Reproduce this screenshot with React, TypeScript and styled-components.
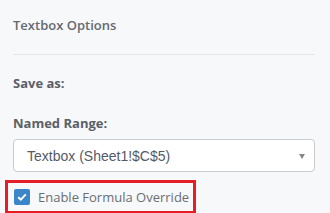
import {createGlobalStyle, styled} from "styled-components";

const GlobalStyle = createGlobalStyle`
  html, body {
    margin: 0;
    padding: 0;
    background: #f7f8fa;
  }
  body {
    font-family: "Open Sans", sans-serif;
  }
`;

const Panel = styled.div`
  width: 330px;
  height: 213px;
  box-sizing: border-box;
  padding: 16px 15px 0 13px;
  background: #f7f8fa;
  overflow: hidden;
`;

const Title = styled.div`
  font-size: 13px;
  font-weight: 600;
  color: #666a70;
  line-height: 18px;
  height: 22px;
`;

const Divider = styled.hr`
  margin: 16px 0 0 0;
  border: none;
  border-top: 1px solid #e5e6e8;
`;

const Label = styled.div<{mt: number}>`
  margin-top: ${(p) => p.mt}px;
  font-size: 13px;
  font-weight: 700;
  color: #5b5f66;
  line-height: 18px;
`;

const Select = styled.div`
  margin-top: 7px;
  height: 33px;
  box-sizing: border-box;
  background: #fff;
  border: 1px solid #ccc;
  border-radius: 4px;
  display: flex;
  align-items: center;
  justify-content: space-between;
  padding: 0 9px 0 13px;
  font-family: "Liberation Sans", Arial, sans-serif;
  font-size: 14px;
  color: #555a66;
`;

const Caret = styled.span`
  width: 0;
  height: 0;
  border-left: 3px solid transparent;
  border-right: 3px solid transparent;
  border-top: 5px solid #888;
  margin-top: 1px;
`;

const Highlight = styled.div`
  margin: 8px 0 0 -8px;
  width: 191px;
  height: 34px;
  box-sizing: border-box;
  border: 3px solid #e41e26;
  display: flex;
  align-items: center;
  gap: 8px;
  padding-left: 6px;
  white-space: nowrap;
`;

const Box = styled.span`
  flex: none;
  width: 16px;
  height: 16px;
  border-radius: 2px;
  background: #3b86c8;
  display: flex;
  align-items: center;
  justify-content: center;
`;

const CheckText = styled.span`
  font-size: 13px;
  color: #6a6e74;
`;

export default function App() {
  return (
    <>
      <GlobalStyle />
      <Panel>
        <Title>Textbox Options</Title>
        <Divider />
        <Label mt={19}>Save as:</Label>
        <Label mt={22}>Named Range:</Label>
        <Select>
          <span>Textbox (Sheet1!$C$5)</span>
          <Caret />
        </Select>
        <Highlight>
          <Box>
            <svg width="10" height="8" viewBox="0 0 10 8">
              <path
                d="M1.2 4.2 L3.8 6.6 L8.8 1.4"
                fill="none"
                stroke="#fff"
                strokeWidth="2"
              />
            </svg>
          </Box>
          <CheckText>Enable Formula Override</CheckText>
        </Highlight>
      </Panel>
    </>
  );
}
